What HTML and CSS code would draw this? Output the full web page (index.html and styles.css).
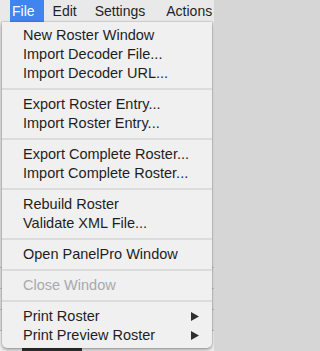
FILE: index.html
```html
<!DOCTYPE html>
<html>
<head>
<meta charset="utf-8">
<link rel="stylesheet" href="styles.css">
</head>
<body>
<div class="screen">
  <div class="menubar">
    <span class="top active">File</span>
    <span class="top">Edit</span>
    <span class="top">Settings</span>
    <span class="top">Actions</span>
  </div>
  <div class="window">
    <div class="win-row"></div>
    <div class="win-row"></div>
    <div class="win-row"></div>
    <div class="win-row last"><span class="bar"></span></div>
  </div>
  <div class="menu">
    <div class="item">New Roster Window</div>
    <div class="item">Import Decoder File...</div>
    <div class="item">Import Decoder URL...</div>
    <div class="sep"></div>
    <div class="item">Export Roster Entry...</div>
    <div class="item">Import Roster Entry...</div>
    <div class="sep"></div>
    <div class="item">Export Complete Roster...</div>
    <div class="item">Import Complete Roster...</div>
    <div class="sep"></div>
    <div class="item">Rebuild Roster</div>
    <div class="item">Validate XML File...</div>
    <div class="sep"></div>
    <div class="item">Open PanelPro Window</div>
    <div class="sep"></div>
    <div class="item disabled">Close Window</div>
    <div class="sep"></div>
    <div class="item sub">Print Roster<svg class="arrow" width="8" height="9" viewBox="0 0 8 9"><polygon points="0,0 8,4.5 0,9" fill="#2e2e2e"/></svg></div>
    <div class="item sub">Print Preview Roster<svg class="arrow" width="8" height="9" viewBox="0 0 8 9"><polygon points="0,0 8,4.5 0,9" fill="#2e2e2e"/></svg></div>
  </div>
</div>
</body>
</html>
```
FILE: styles.css
```css
html, body {
  margin: 0;
  padding: 0;
  background: #d6d6d6;
}
body {
  width: 214px;
  height: 351px;
  overflow: hidden;
  font-family: "Liberation Sans", Arial, sans-serif;
}
.screen {
  position: relative;
  width: 214px;
  height: 351px;
}
.menubar {
  height: 22px;
  background: #e9e9e9;
  display: flex;
  align-items: stretch;
  font-size: 14px;
  color: #1f1f1f;
  white-space: nowrap;
}
.top {
  display: flex;
  align-items: center;
  margin-right: 18px;
}
.top.active {
  background: #3f84ef;
  color: #ffffff;
  margin-left: 10px;
  padding: 0 9px 0 2px;
  margin-right: 9px;
}
.top:nth-child(3) { margin-right: 21px; }
.window {
  height: 329px;
  background: #e4e4e4;
  display: flex;
  flex-direction: column;
  justify-content: flex-end;
}
.win-row {
  height: 20px;
  border-top: 1px solid #c4c4c4;
}
.win-row.last {
  background: #f4f4f4;
  display: flex;
  align-items: flex-end;
  padding-left: 22px;
}
.bar {
  display: block;
  width: 60px;
  height: 3px;
  background: #333;
}
.menu {
  position: absolute;
  left: 2px;
  top: 22px;
  width: 210px;
  padding: 4px 0 3px;
  background: #f0f0f1;
  border-radius: 0 0 5px 5px;
  box-shadow: 0 2px 4px rgba(0,0,0,0.35), 0 0 0 0.5px rgba(0,0,0,0.15);
  display: flex;
  flex-direction: column;
  font-size: 14.5px;
  color: #1e1e1e;
}
.item {
  height: 19px;
  line-height: 19px;
  padding-left: 21px;
  display: flex;
  align-items: center;
  white-space: nowrap;
}
.item.disabled {
  color: #a9a9a9;
}
.item.sub {
  justify-content: space-between;
  padding-right: 13px;
}
.arrow {
  display: block;
}
.sep {
  height: 2px;
  margin: 5px 0;
  background: #dcdcdd;
}
```
